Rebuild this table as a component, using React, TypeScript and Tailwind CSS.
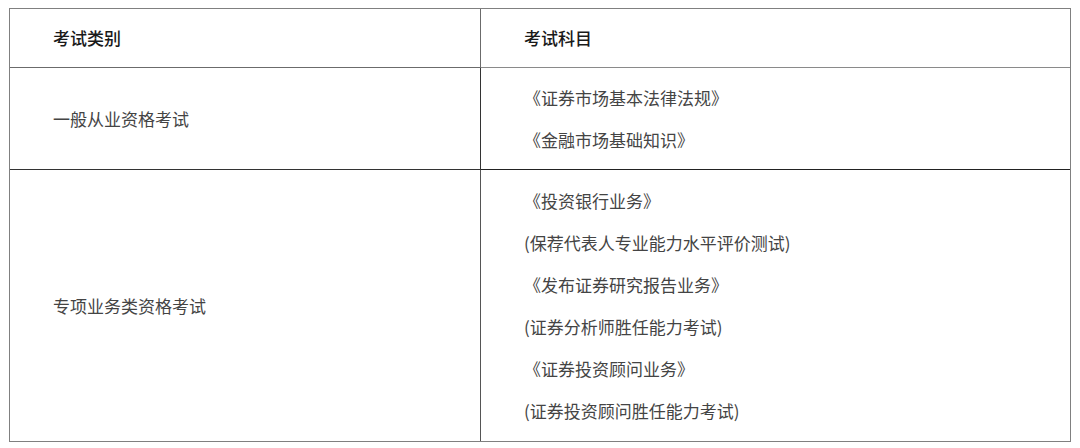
export default function App() {
  const font = { fontFamily: '"Noto Sans CJK SC", "Noto Sans", sans-serif' };
  return (
    <div className="w-[1080px] h-[448px] bg-white pt-[8px] pl-[9px]" style={font}>
      <div className="w-[1062px] h-[434px] border-[1.5px] border-[#808080] grid grid-cols-[471px_1fr] grid-rows-[59px_102px_1fr] text-[17px]">
        <div className="border-r border-b border-[#6b6b6b] flex items-center pl-[43px] font-medium text-[#1a1a1a]">考试类别</div>
        <div className="border-b border-[#8a8a8a] flex items-center pl-[43px] font-medium text-[#1a1a1a]">考试科目</div>

        <div className="border-r border-b border-[#333] flex items-center pl-[43px] text-[#444]">一般从业资格考试</div>
        <div className="border-b border-[#222] flex flex-col justify-center pl-[43px] text-[#444] leading-[42px]">
          <p>《证券市场基本法律法规》</p>
          <p>《金融市场基础知识》</p>
        </div>

        <div className="border-r border-[#555] flex items-center pl-[43px] text-[#444]">专项业务类资格考试</div>
        <div className="flex flex-col justify-center pl-[43px] text-[#444] leading-[42px]">
          <p>《投资银行业务》</p>
          <p>(保荐代表人专业能力水平评价测试)</p>
          <p>《发布证券研究报告业务》</p>
          <p>(证券分析师胜任能力考试)</p>
          <p>《证券投资顾问业务》</p>
          <p>(证券投资顾问胜任能力考试)</p>
        </div>
      </div>
    </div>
  );
}
